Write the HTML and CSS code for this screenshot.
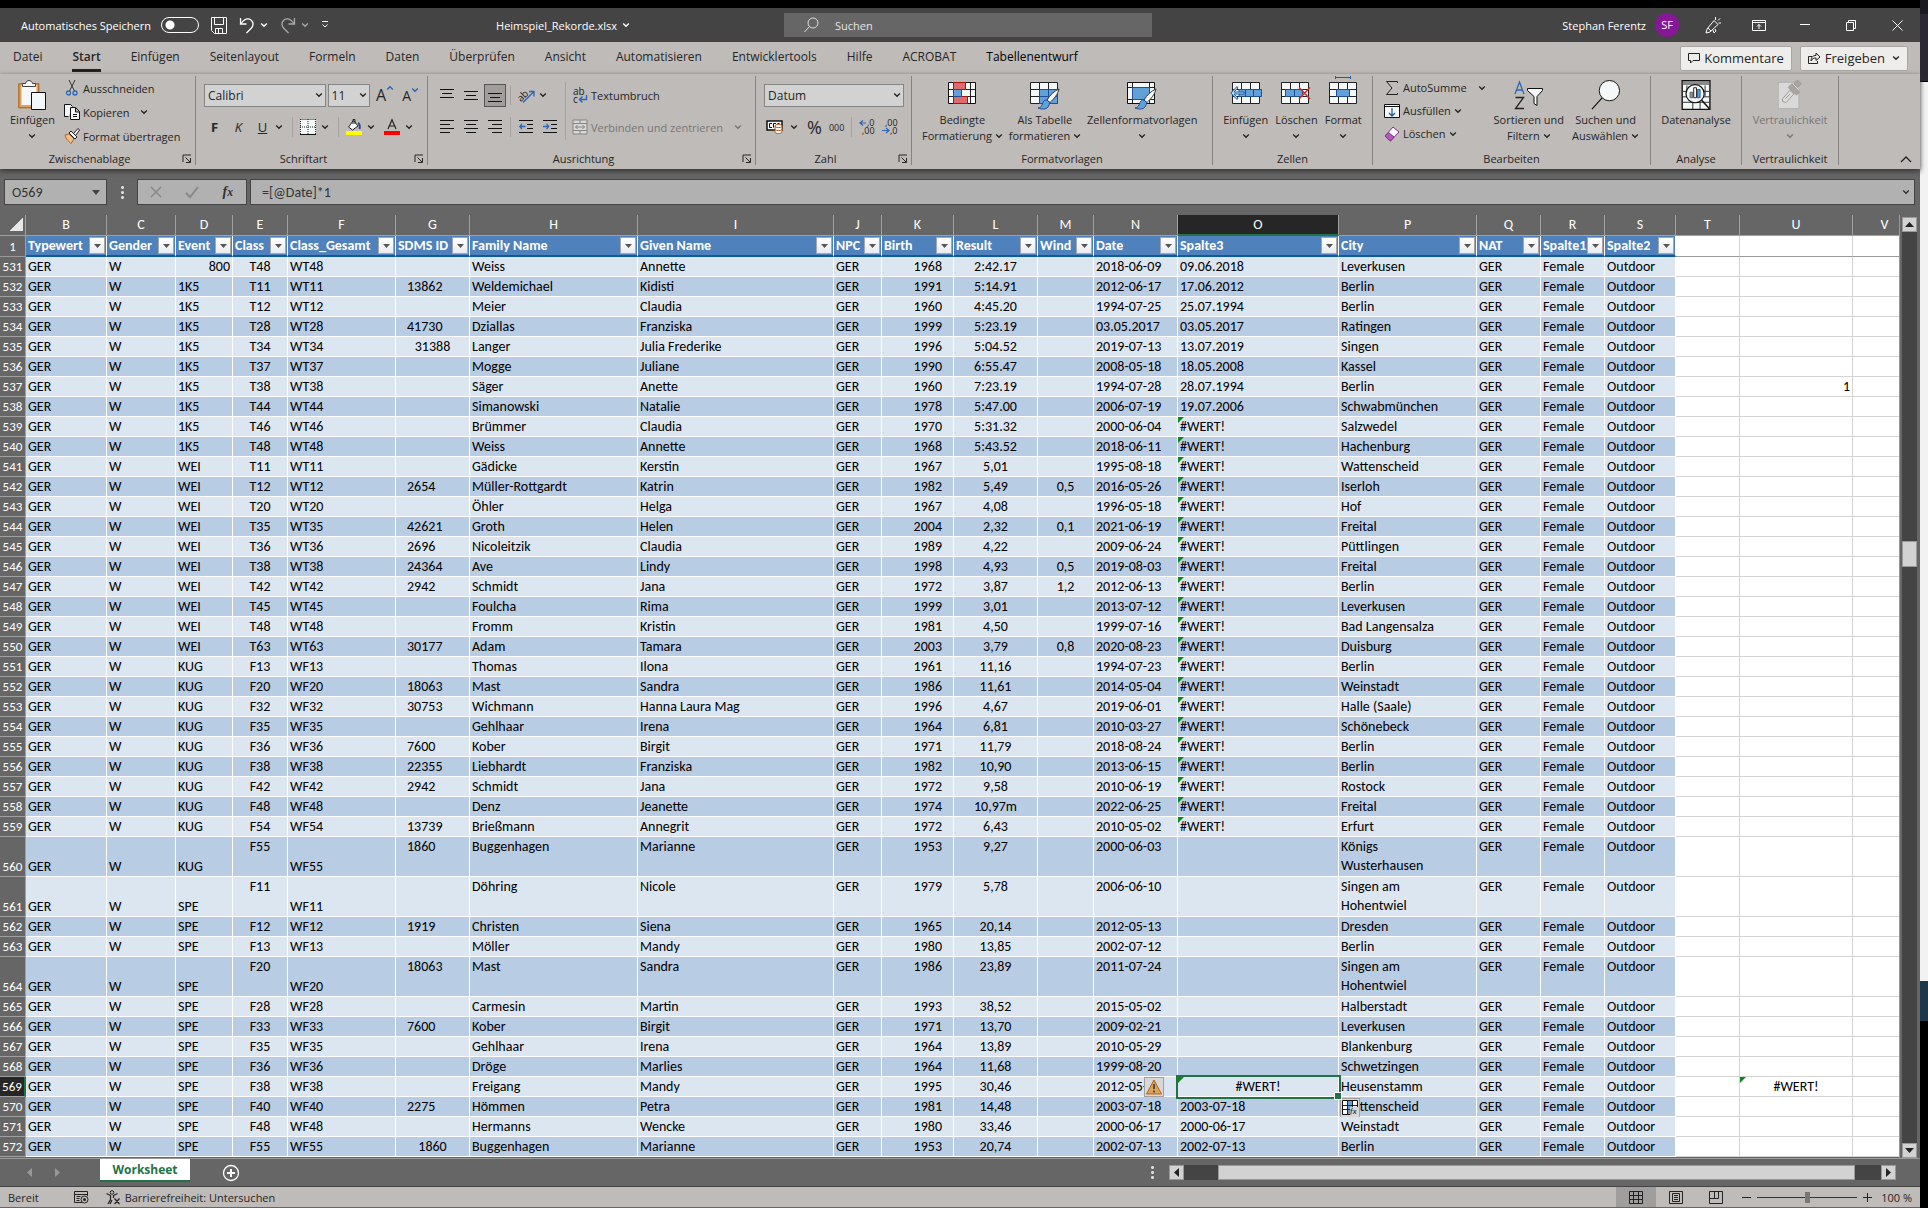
FILE: index.html
```
<!DOCTYPE html>
<html lang="de">
<head>
    <meta charset="utf-8">
    <title>Heimspiel_Rekorde.xlsx</title>
    <link rel="stylesheet" href="styles.css">
</head>
<body>

<!-- shared icons -->
<svg class="sprite" aria-hidden="true">
    <symbol id="chev" viewBox="0 0 8 8"><path d="M1.2 2.5 4 5.3 6.8 2.5" fill="none" stroke="currentColor" stroke-width="1.4"/></symbol>
    <symbol id="launch" viewBox="0 0 10 10"><path d="M1 8V1h8M3.500 3.500 8 8M8.500 4v4.500H4" fill="none" stroke="currentColor"/></symbol>
    <symbol id="undo" viewBox="0 0 16 17"><path d="M1.500 1v6h6M2 6.500C5 2 9 .8 12 3c3 2.500 2.500 6 0 8.500L7.500 16" fill="none" stroke="currentColor" stroke-width="1.3"/></symbol>
    <symbol id="grid" viewBox="0 0 28 22"><path d="M.5.5h27v21H.5z" fill="#f4f8f8" stroke="#222"/><path d="M9.500 1v20M18.500 1v20M1 7.500h26M1 14.500h26" stroke="#222" fill="none"/></symbol>
    <symbol id="brush" viewBox="0 0 24 22"><path d="M23 1c-5 2-9 6-12 11l3 2.500C18 11 22 6 23 1z" fill="#f4f8f8" stroke="#333"/><path d="M11 12c-4 0-4 3-5 5-1 2-2 2.500-4 3 4 1.500 8 1.500 10-1 1-1.500 1.500-3 1.500-4.500z" fill="#62a0d8" stroke="#1e4e9c"/></symbol>
</svg>

<div class="window">
    <header class="titlebar">
        <div class="title-left">
            <div class="quick">
                <label class="autosave">Automatisches Speichern <input type="checkbox" class="toggle"></label>
                <button aria-label="Speichern"><svg width="16" height="17" viewBox="0 0 16 17"><path d="M.5.5h15v16h-12l-3-3zM3.500.5v7h9v-7M4.500 16.500v-5h7v5M7.500 12v4" fill="none" stroke="#fff"/></svg></button>
                <button aria-label="Rückgängig"><svg width="16" height="17"><use href="#undo"/></svg><svg class="chev"><use href="#chev"/></svg></button>
                <button aria-label="Wiederholen" class="dim"><svg width="16" height="17" viewBox="0 0 16 17"><g transform="matrix(-1 0 0 1 16 0)"><use href="#undo" width="16" height="17"/></g></svg><svg class="chev"><use href="#chev"/></svg></button>
                <button aria-label="Symbolleiste anpassen"><svg width="8" height="8" viewBox="0 0 8 8"><path d="M1 .5h6M1.500 3.500 4 6l2.500-2.500" fill="none" stroke="#fff"/></svg></button>
            </div>
            <button class="filename">Heimspiel_Rekorde.xlsx <svg class="chev"><use href="#chev"/></svg></button>
        </div>
        <label class="search">
            <svg width="15" height="16" viewBox="0 0 15 16"><circle cx="9" cy="6" r="5" fill="none" stroke="#ddd"/><path d="M5.500 9.500.5 15" stroke="#ddd"/></svg>
            <input type="text" placeholder="Suchen" aria-label="Suchen">
        </label>
        <div class="title-right">
            <span>Stephan Ferentz</span>
            <span class="avatar">SF</span>
            <button aria-label="Neuigkeiten"><svg width="16" height="17" viewBox="0 0 16 17"><path d="M9 3.500 2 12l-1 4 4-1 8-7.500zM3 11l3 3M10.500 3V0M13 3.500l2-2M13.500 6H16M8 13l1 3 2-2-1-2" fill="none" stroke="#fff"/></svg></button>
            <button aria-label="Menüband-Optionen"><svg width="14" height="11" viewBox="0 0 14 11"><path d="M.5.5h13v10H.5zM.5 2.500h13M7 9V4.500M5 6.500l2-2 2 2" fill="none" stroke="#fff"/></svg></button>
            <button aria-label="Minimieren"><svg width="10" height="10"><path d="M0 4.500h10" stroke="#fff"/></svg></button>
            <button aria-label="Verkleinern"><svg width="10" height="11" viewBox="0 0 10 11"><path d="M.5 2.500h7v8h-7zM2.500 2V.5h7v8H8" fill="none" stroke="#fff"/></svg></button>
            <button aria-label="Schließen"><svg width="11" height="11" viewBox="0 0 11 11"><path d="M.5.5l10 10M10.500.5l-10 10" stroke="#fff"/></svg></button>
        </div>
    </header>

    <nav class="tabs">
        <a href="#datei">Datei</a>
        <a href="#start" class="active">Start</a>
        <a href="#einfuegen">Einfügen</a>
        <a href="#layout">Seitenlayout</a>
        <a href="#formeln">Formeln</a>
        <a href="#daten">Daten</a>
        <a href="#pruefen">Überprüfen</a>
        <a href="#ansicht">Ansicht</a>
        <a href="#auto">Automatisieren</a>
        <a href="#dev">Entwicklertools</a>
        <a href="#hilfe">Hilfe</a>
        <a href="#acrobat">ACROBAT</a>
        <a href="#entwurf" class="context">Tabellenentwurf</a>
        <div class="share">
            <button><svg width="12" height="11" viewBox="0 0 12 11"><path d="M.5.5h11v7H5l-2.500 2.500V7.500h-2z" fill="none" stroke="#222"/></svg>Kommentare</button>
            <button><svg width="13" height="12" viewBox="0 0 13 12"><path d="M4 4.500H.5v7h9V9M3 9c0-4 2-5.500 5-5.500V1l4 4-4 3.500V6C6 6 4 6.500 3 9z" fill="none" stroke="#222"/></svg>Freigeben<svg class="chev"><use href="#chev"/></svg></button>
        </div>
    </nav>

    <div class="ribbon">
        <section class="group g-clip">
            <div class="tools">
                <button class="big">
                    <svg width="28" height="30" viewBox="0 0 28 30"><path d="M.8 3.800h20v24H.8z" fill="#dfa257" stroke="#a85a12"/><path d="M3.500 5h15v20h-15z" fill="#f4f8f8"/><path d="M4.500 6.500v-3h3c1-4 6-4 7 0h3v3z" fill="#f4f8f8" stroke="#444"/><path d="M13.500 12.500h14v17h-14z" fill="#f4f8f8" stroke="#111"/></svg>
                    <span>Einfügen</span><svg class="chev"><use href="#chev"/></svg>
                </button>
                <div class="stack">
                    <button><svg width="16" height="16" viewBox="0 0 16 16"><path d="M5 0l5.500 11M11 0 5.500 11" stroke="#333" fill="none"/><circle cx="4.500" cy="13" r="2" fill="none" stroke="#2a66b8" stroke-width="1.3"/><circle cx="11" cy="13" r="2" fill="none" stroke="#2a66b8" stroke-width="1.3"/></svg>Ausschneiden</button>
                    <button><svg width="16" height="16" viewBox="0 0 16 16"><path d="M4.500 12.500h-4V.5h6l2 2" fill="#f4f8f8" stroke="#111"/><path d="M6.500 3.500h5l4 4v8h-9zM11.500 4v4h4M9 10.500h4M9 12.500h4" fill="#f4f8f8" stroke="#111"/></svg>Kopieren<svg class="chev wide"><use href="#chev"/></svg></button>
                    <button><svg width="16" height="16" viewBox="0 0 16 16"><path d="M1 7l4-1 5 5-3 4.500C5 13 2 12 1 7z" fill="#f0c088" stroke="#b5601a"/><path d="M5 5l6 6 2-2-6-6zM10 5l4-4.500L15.500 2 12 7" fill="#f4f8f8" stroke="#222"/></svg>Format übertragen</button>
                </div>
            </div>
            <footer class="has-launch">Zwischenablage<svg class="launch"><use href="#launch"/></svg></footer>
        </section>

        <section class="group g-font">
            <div class="tools rows">
                <div class="line">
                    <span class="combo c-font"><select aria-label="Schriftart"><option>Calibri</option></select><svg class="chev"><use href="#chev"/></svg></span>
                    <span class="combo c-size"><select aria-label="Schriftgrad"><option>11</option></select><svg class="chev"><use href="#chev"/></svg></span>
                    <button class="grow" aria-label="Schriftgrad vergrößern">A<svg class="chev up"><use href="#chev"/></svg></button>
                    <button class="grow small" aria-label="Schriftgrad verkleinern">A<svg class="chev"><use href="#chev"/></svg></button>
                </div>
                <div class="line fmt">
                    <button class="letter"><b>F</b></button>
                    <button class="letter"><i>K</i></button>
                    <button class="letter"><u>U</u></button>
                    <svg class="chev"><use href="#chev"/></svg>
                    <hr>
                    <button aria-label="Rahmen"><svg width="16" height="16" viewBox="0 0 16 16"><path d="M0 0h16v16H0z" fill="#f4f8f8"/><path d="M.5.5h15M.5 0v15M15.500 0v15M8 0v15M0 8h16" stroke="#222" stroke-dasharray="1 1" fill="none"/><path d="M0 15.500h16" stroke="#111"/></svg></button>
                    <svg class="chev"><use href="#chev"/></svg>
                    <hr>
                    <button aria-label="Füllfarbe"><svg width="16" height="16" viewBox="0 0 16 16"><path d="M7 2 2.500 8l4 3L12 7 8 2z" fill="#f4f8f8" stroke="#222"/><path d="M7 5V.5h2V5" fill="none" stroke="#222"/><path d="M12 4c2 1 2 3 1.500 6" fill="none" stroke="#2b4a8a" stroke-width="2"/><path d="M0 12h16v4H0z" fill="#ff0"/></svg></button>
                    <svg class="chev"><use href="#chev"/></svg>
                    <button aria-label="Schriftfarbe"><svg width="16" height="16" viewBox="0 0 16 16"><path d="M4 10 8 .8 12 10M5.500 7h5" fill="none" stroke="#222" stroke-width="1.200"/><path d="M0 12h16v4H0z" fill="#f00"/></svg></button>
                    <svg class="chev"><use href="#chev"/></svg>
                </div>
            </div>
            <footer class="has-launch">Schriftart<svg class="launch"><use href="#launch"/></svg></footer>
        </section>

        <section class="group g-align">
            <div class="tools">
                <div class="rows">
                    <div class="line al">
                        <button aria-label="Oben"><svg width="14" height="16"><path d="M0 2.500h14M2 6.500h10M0 10.500h14" stroke="#111"/></svg></button>
                        <button aria-label="Mitte"><svg width="14" height="16"><path d="M0 4.500h14M2 8.500h10M0 12.500h14" stroke="#111"/></svg></button>
                        <button class="pressed" aria-label="Unten"><svg width="14" height="16"><path d="M0 6.500h14M2 10.500h10M0 14.500h14" stroke="#111"/></svg></button>
                        <hr>
                        <button aria-label="Ausrichtung"><svg width="17" height="17" viewBox="0 0 17 17"><text x="-1" y="12" font-size="10" transform="rotate(-45 5 9)" fill="#222">ab</text><path d="M5 15.500 15.500 5M11 4.500h5v5" fill="none" stroke="#2a66b8" stroke-width="1.300"/></svg></button>
                        <svg class="chev"><use href="#chev"/></svg>
                    </div>
                    <div class="line al">
                        <button aria-label="Linksbündig"><svg width="14" height="14"><path d="M0 .5h14M0 4.500h10M0 8.500h14M0 12.500h10" stroke="#111"/></svg></button>
                        <button aria-label="Zentriert"><svg width="14" height="14"><path d="M0 .5h14M2 4.500h10M0 8.500h14M2 12.500h10" stroke="#111"/></svg></button>
                        <button aria-label="Rechtsbündig"><svg width="14" height="14"><path d="M0 .5h14M4 4.500h10M0 8.500h14M4 12.500h10" stroke="#111"/></svg></button>
                        <hr>
                        <button aria-label="Einzug verkleinern"><svg width="14" height="14"><path d="M0 .5h14M8 4.500h6M8 8.500h6M0 12.500h14" stroke="#111"/><path d="M6.500 6.500H.8M3 4 .8 6.500 3 9" fill="none" stroke="#2a66b8" stroke-width="1.300"/></svg></button>
                        <button aria-label="Einzug vergrößern"><svg width="14" height="14"><path d="M0 .5h14M8 4.500h6M8 8.500h6M0 12.500h14" stroke="#111"/><path d="M0 6.500h5.700M3.500 4l2.200 2.500L3.500 9" fill="none" stroke="#2a66b8" stroke-width="1.300"/></svg></button>
                    </div>
                </div>
                <hr class="tall">
                <div class="rows wrap">
                    <button><svg width="16" height="17" viewBox="0 0 16 17"><text x="1" y="8" font-size="10" fill="#222">ab</text><text x="1" y="16" font-size="10" fill="#222">c</text><path d="M14.500 8v4.500H8M10.500 9.500 7.500 12.500l3 3" fill="none" stroke="#2a66b8" stroke-width="1.400"/></svg>Textumbruch</button>
                    <button class="off"><svg width="16" height="16" viewBox="0 0 16 16"><path d="M1 1h14v14H1zM1 4.500h14M1 11.500h14M8 1v3.500M8 11.500V15M3.500 8h9M5.500 6l-2 2 2 2M10.500 6l2 2-2 2" fill="#d8d8d8" stroke="#858585"/></svg>Verbinden und zentrieren<svg class="chev wide"><use href="#chev"/></svg></button>
                </div>
            </div>
            <footer class="has-launch">Ausrichtung<svg class="launch"><use href="#launch"/></svg></footer>
        </section>

        <section class="group g-num">
            <div class="tools rows">
                <div class="line"><span class="combo c-num"><select aria-label="Zahlenformat"><option>Datum</option></select><svg class="chev"><use href="#chev"/></svg></span></div>
                <div class="line num">
                    <button aria-label="Buchhaltung"><svg width="18" height="14" viewBox="0 0 18 14"><path d="M1 1h15v9H1z" fill="#f4f8f8" stroke="#111" stroke-width="1.500"/><path d="M6 3.500H3.500v4H6M10 3.500H7.500v4M13.500 3.500h-2" fill="none" stroke="#111"/><path d="M9 6c0-2 7-2 7 0v6c0 2-7 2-7 0z" fill="#fff" stroke="#c0560c"/><path d="M9 6.500c1 1.500 6 1.500 7 0M9 9.500c1 1.500 6 1.500 7 0" fill="none" stroke="#c0560c"/></svg></button>
                    <svg class="chev"><use href="#chev"/></svg>
                    <button class="pct">%</button>
                    <button class="thou">000</button>
                    <hr>
                    <button aria-label="Dezimalstelle hinzufügen"><svg width="16" height="16" viewBox="0 0 16 16"><text x="8" y="7" font-size="9" fill="#222">,0</text><text x="3" y="15" font-size="9" fill="#222">,00</text><path d="M7 4H1M4 1.500 1 4l3 2.500" fill="none" stroke="#2a66b8" stroke-width="1.200"/></svg></button>
                    <button aria-label="Dezimalstelle löschen"><svg width="16" height="16" viewBox="0 0 16 16"><text x="3" y="7" font-size="9" fill="#222">,00</text><text x="8" y="15" font-size="9" fill="#222">,0</text><path d="M0 11.500h7M4 9l3 2.500L4 14" fill="none" stroke="#2a66b8" stroke-width="1.200"/></svg></button>
                </div>
            </div>
            <footer class="has-launch">Zahl<svg class="launch"><use href="#launch"/></svg></footer>
        </section>

        <section class="group g-styles">
            <div class="tools">
                <button class="big"><svg width="28" height="30" viewBox="0 0 28 30"><path d="M.5 2.500h27v21H.5z" fill="#f4f8f8" stroke="#111"/><path d="M22.500 3v20M1 9.500h26M1 16.500h26M5.500 3v20" stroke="#222"/><path d="M5.500 2.500h12v7h-12zM5.500 16.500h14v7h-14z" fill="#dd6b6b" stroke="#a11"/><path d="M5.500 9.500h8v7h-8z" fill="#62a0d8" stroke="#1e4e9c"/></svg><span>Bedingte</span><span>Formatierung <svg class="chev"><use href="#chev"/></svg></span></button>
                <button class="big"><svg width="30" height="30" viewBox="0 0 30 30"><use href="#grid" y="2" width="28" height="22"/><path d="M9.500 9.500h18v14h-18z" fill="#62a0d8" stroke="#1e4e9c"/><path d="M18.500 10v13M10 16.500h17" stroke="#1e4e9c"/><use href="#brush" x="6" y="8" width="24" height="22"/></svg><span>Als Tabelle</span><span>formatieren <svg class="chev"><use href="#chev"/></svg></span></button>
                <button class="big"><svg width="30" height="30" viewBox="0 0 30 30"><path d="M.5 2.500h27v21H.5z" fill="#f4f8f8" stroke="#111"/><path d="M5.500 3v20M22.500 3v20M1 7.500h26M1 19.500h26" stroke="#222"/><path d="M5.500 7.500h17v12h-17z" fill="#62a0d8" stroke="#1e4e9c"/><use href="#brush" x="6" y="8" width="24" height="22"/></svg><span>Zellenformatvorlagen</span><svg class="chev"><use href="#chev"/></svg></button>
            </div>
            <footer>Formatvorlagen</footer>
        </section>

        <section class="group g-cells">
            <div class="tools">
                <button class="big"><svg width="32" height="30" viewBox="0 0 32 30"><use href="#grid" x="2" y="2" width="28" height="22"/><path d="M9 9.500h22.500v7H9zM15.500 9.500v7M23.500 9.500v7" fill="#62a0d8" stroke="#1e4e9c"/><path d="M14 12H4l4-4-1-1.500L.8 13 7 19.500 8 18l-4-4h10z" fill="#b8d4ee" stroke="#1e5ea8"/></svg><span>Einfügen</span><svg class="chev"><use href="#chev"/></svg></button>
                <button class="big"><svg width="30" height="30" viewBox="0 0 30 30"><use href="#grid" y="2" width="28" height="22"/><path d="M4.500 9.500h17v7h-17zM13.500 9.500v7" fill="#62a0d8" stroke="#1e4e9c"/><path d="M18 7.500 29 19M29 7.500 18 19" stroke="#d03020" stroke-width="1.600"/></svg><span>Löschen</span><svg class="chev"><use href="#chev"/></svg></button>
                <button class="big"><svg width="28" height="30" viewBox="0 0 28 30"><use href="#grid" y="2" width="28" height="22"/><path d="M7.500 9.500h13v7h-13z" fill="#62a0d8" stroke="#1e4e9c"/><path d="M6.500-4v3M21.500-4v3M6.500-2.500h15" stroke="#1e5ea8"/></svg><span>Format</span><svg class="chev"><use href="#chev"/></svg></button>
            </div>
            <footer>Zellen</footer>
        </section>

        <section class="group g-edit">
            <div class="tools">
                <div class="stack">
                    <button><svg width="16" height="16" viewBox="0 0 16 16"><path d="M13.500 3V1.500H2.500L8 8l-5.500 6.500h11V13" fill="none" stroke="#222"/></svg>AutoSumme<svg class="chev wide"><use href="#chev"/></svg></button>
                    <button><svg width="16" height="16" viewBox="0 0 16 16"><path d="M.5 1.500h15v13H.5zM.5 3.500h15" fill="#f4f8f8" stroke="#111"/><path d="M8 5v7.500M5 10l3 3 3-3" fill="none" stroke="#1e5ea8" stroke-width="1.300"/></svg>Ausfüllen<svg class="chev"><use href="#chev"/></svg></button>
                    <button><svg width="16" height="16" viewBox="0 0 16 16"><path d="M9 1l6 5-8.500 9L1 10z" fill="#f4f8f8" stroke="#8a2a94"/><path d="M4.500 6.500 10 11l-3.500 4L1 10z" fill="#b35abb" stroke="#8a2a94"/></svg>Löschen<svg class="chev"><use href="#chev"/></svg></button>
                </div>
                <button class="big"><svg width="30" height="30" viewBox="0 0 30 30"><path d="M1 14 5.500 2 10 14M2.500 10h6" fill="none" stroke="#2a66b8" stroke-width="1.300"/><path d="M1.500 17.500h8L1.500 28.500h8.500" fill="none" stroke="#222" stroke-width="1.300"/><path d="M13.500 8.500h15v2l-5.500 6v9l-3-2v-7l-6.500-6z" fill="#f4f8f8" stroke="#111"/></svg><span>Sortieren und</span><span>Filtern <svg class="chev"><use href="#chev"/></svg></span></button>
                <button class="big"><svg width="30" height="31" viewBox="0 0 30 31"><circle cx="18.500" cy="11" r="10.500" fill="#f4f8f8" stroke="#111"/><path d="M11 18.500.5 30" stroke="#111" stroke-width="1.200"/></svg><span>Suchen und</span><span>Auswählen <svg class="chev"><use href="#chev"/></svg></span></button>
            </div>
            <footer>Bearbeiten</footer>
        </section>

        <section class="group g-ana">
            <div class="tools">
                <button class="big"><svg width="32" height="33" viewBox="0 0 32 33"><path d="M.8.800h30.500v31.500H.8z" fill="#f4f8f8" stroke="#111" stroke-width="1.500"/><path d="M1.500 1.500h29v4h-29z" fill="#8a8a8a"/><path d="M1 12.500h30M1 18.500h30M1 24.500h30M6 6v12M12.500 24v8M20.500 24v8M26 6v12" stroke="#222"/><circle cx="15" cy="15" r="10" fill="#f4f8f8" stroke="#111" stroke-width="1.300"/><path d="M9.500 13.500h3v6h-3z" fill="#999" stroke="#555"/><path d="M13.500 8.500h3v11h-3z" fill="#fff" stroke="#111"/><path d="M17.500 10.500h3v9h-3z" fill="#62a0d8" stroke="#1e4e9c"/><path d="m22 22 9 10" stroke="#111" stroke-width="1.600"/></svg><span>Datenanalyse</span></button>
            </div>
            <footer>Analyse</footer>
        </section>

        <section class="group g-sens">
            <div class="tools">
                <button class="big off"><svg width="30" height="32" viewBox="0 0 30 32"><path d="M2.500 2.500h22v28h-22z" fill="#d9d9d9" stroke="#b0b0b0"/><path d="m7 20 8-9 4 4-8 9-4-1zM10 20l5-5" fill="#ddd" stroke="#999"/><path d="m13 8 4-4 8 9-3 3zM19 4l4-4 4 4-4 4z" fill="#a8a5a3" stroke="#999"/></svg><span>Vertraulichkeit</span><svg class="chev"><use href="#chev"/></svg></button>
            </div>
            <footer>Vertraulichkeit</footer>
        </section>
        <button class="collapse" aria-label="Menüband reduzieren"><svg width="12" height="7"><path d="M1 6l5-5 5 5" fill="none" stroke="#222" stroke-width="1.300"/></svg></button>
    </div>

    <div class="formulabar">
        <div class="namebox"><input type="text" value="O569" aria-label="Namenfeld"><svg width="8" height="5"><path d="M0 0h8L4 5z" fill="#444"/></svg></div>
        <span class="dots"></span>
        <div class="fx">
            <button aria-label="Abbrechen"><svg width="12" height="12"><path d="M1 1l10 10M11 1 1 11" stroke="#888" stroke-width="1.500"/></svg></button>
            <button aria-label="Eingeben"><svg width="14" height="12"><path d="M1 7l4 4L13 1" fill="none" stroke="#888" stroke-width="2"/></svg></button>
            <button class="fn">f<small>x</small></button>
        </div>
        <div class="formula"><input type="text" value="=[@Date]*1" aria-label="Formel"><svg class="chev"><use href="#chev"/></svg></div>
    </div>

    <main class="sheet">
        <div class="cells">
            <table>
                <colgroup id="cols"></colgroup>
                <thead id="head"></thead>
                <tbody id="rows"></tbody>
            </table>
        </div>
        <div class="vscroll">
            <button aria-label="Nach oben"><svg width="9" height="5"><path d="M0 5h9L4.500 0z" fill="#222"/></svg></button>
            <div class="track"><div class="thumb"></div></div>
            <button aria-label="Nach unten"><svg width="9" height="5"><path d="M0 0h9L4.500 5z" fill="#222"/></svg></button>
        </div>
    </main>

    <div class="sheetbar">
        <button class="nav" aria-label="Zurück"><svg width="5" height="9"><path d="M5 0v9L0 4.500z" fill="#999"/></svg></button>
        <button class="nav" aria-label="Weiter"><svg width="5" height="9"><path d="M0 0v9l5-4.500z" fill="#999"/></svg></button>
        <button class="sheettab">Worksheet</button>
        <button class="add" aria-label="Neues Blatt"><svg width="18" height="18" viewBox="0 0 18 18"><circle cx="9" cy="9" r="7.500" fill="none" stroke="#fff" stroke-width="1.300"/><path d="M9 5v8M5 9h8" stroke="#fff" stroke-width="2"/></svg></button>
        <span class="dots"></span>
        <div class="hscroll">
            <button aria-label="Nach links"><svg width="5" height="9"><path d="M5 0v9L0 4.500z" fill="#222"/></svg></button>
            <div class="track"><div class="thumb"></div></div>
            <button aria-label="Nach rechts"><svg width="5" height="9"><path d="M0 0v9l5-4.500z" fill="#222"/></svg></button>
        </div>
    </div>

    <footer class="status">
        <span class="ready">Bereit</span>
        <svg class="macro" width="15" height="13" viewBox="0 0 15 13"><path d="M8 11.500H.5V.5h13V5M.5 3.500h13M2.500 5.500h4M2.500 7.500h3M2.500 9.500h3" fill="none" stroke="#222"/><circle cx="10.500" cy="8.500" r="3.500" fill="none" stroke="#222"/><circle cx="10.500" cy="8.500" r="1.500" fill="#222"/></svg>
        <button class="access"><svg width="15" height="15" viewBox="0 0 15 15"><circle cx="6" cy="2.500" r="1.800" fill="none" stroke="#222"/><path d="M.5 3.500l4 2v4L2 14M11.500 3.500l-4 2V8M4 14l2-4M8.500 8.500l5 5.500M13.500 8.500l-5 5.500" fill="none" stroke="#222" stroke-width="1.200"/></svg>Barrierefreiheit: Untersuchen</button>
        <div class="views">
            <button class="on" aria-label="Normal"><svg width="14" height="13"><path d="M.5.5h13v12H.5zM.5 4.500h13M.5 8.500h13M4.500.5v12M9.500.5v12" fill="none" stroke="#222"/></svg></button>
            <button aria-label="Seitenlayout"><svg width="14" height="13"><path d="M.5.5h13v12H.5zM3.500 2.500h7v8h-7zM5 4.500h4M5 6.500h4M5 8.500h4" fill="none" stroke="#222"/></svg></button>
            <button aria-label="Umbruchvorschau"><svg width="14" height="13"><path d="M.5.5h13v12H.5zM5.500.5v7M9.500.5v7M.5 7.500h9" fill="none" stroke="#222"/></svg></button>
        </div>
        <button class="zoom" aria-label="Verkleinern"><svg width="9" height="9"><path d="M0 4.500h9" stroke="#222"/></svg></button>
        <input type="range" class="slider" min="0" max="100" value="50" aria-label="Zoom">
        <button class="zoom" aria-label="Vergrößern"><svg width="9" height="9"><path d="M0 4.500h9M4.500 0v9" stroke="#222"/></svg></button>
        <span class="percent">100 %</span>
    </footer>
</div>
<div class="desktop"></div>

<script>
    // letter, width, header text
    const columns = [
        ['B', 81, 'Typewert'], ['C', 69, 'Gender'], ['D', 57, 'Event'], ['E', 55, 'Class'],
        ['F', 108, 'Class_Gesamt'], ['G', 74, 'SDMS ID'], ['H', 168, 'Family Name'], ['I', 196, 'Given Name'],
        ['J', 48, 'NPC'], ['K', 72, 'Birth'], ['L', 84, 'Result'], ['M', 56, 'Wind'], ['N', 84, 'Date'],
        ['O', 161, 'Spalte3'], ['P', 138, 'City'], ['Q', 64, 'NAT'], ['R', 64, 'Spalte1'], ['S', 71, 'Spalte2'],
        ['T', 64, ''], ['U', 113, ''], ['V', 64, '']
    ];

    // rows with a wrapped city
    const tallRows = [560, 561, 564];

    // event|class|id|family|given|birth|result|wind|date|spalte3|city
    const records = `800|T48||Weiss|Annette|1968|2:42.17||2018-06-09|09.06.2018|Leverkusen
1K5|T11|13862|Weldemichael|Kidisti|1991|5:14.91||2012-06-17|17.06.2012|Berlin
1K5|T12||Meier|Claudia|1960|4:45.20||1994-07-25|25.07.1994|Berlin
1K5|T28|41730|Dziallas|Franziska|1999|5:23.19||03.05.2017|03.05.2017|Ratingen
1K5|T34|31388|Langer|Julia Frederike|1996|5:04.52||2019-07-13|13.07.2019|Singen
1K5|T37||Mogge|Juliane|1990|6:55.47||2008-05-18|18.05.2008|Kassel
1K5|T38||Säger|Anette|1960|7:23.19||1994-07-28|28.07.1994|Berlin
1K5|T44||Simanowski|Natalie|1978|5:47.00||2006-07-19|19.07.2006|Schwabmünchen
1K5|T46||Brümmer|Claudia|1970|5:31.32||2000-06-04|#WERT!|Salzwedel
1K5|T48||Weiss|Annette|1968|5:43.52||2018-06-11|#WERT!|Hachenburg
WEI|T11||Gädicke|Kerstin|1967|5,01||1995-08-18|#WERT!|Wattenscheid
WEI|T12|2654|Müller-Rottgardt|Katrin|1982|5,49|0,5|2016-05-26|#WERT!|Iserloh
WEI|T20||Öhler|Helga|1967|4,08||1996-05-18|#WERT!|Hof
WEI|T35|42621|Groth|Helen|2004|2,32|0,1|2021-06-19|#WERT!|Freital
WEI|T36|2696|Nicoleitzik|Claudia|1989|4,22||2009-06-24|#WERT!|Püttlingen
WEI|T38|24364|Ave|Lindy|1998|4,93|0,5|2019-08-03|#WERT!|Freital
WEI|T42|2942|Schmidt|Jana|1972|3,87|1,2|2012-06-13|#WERT!|Berlin
WEI|T45||Foulcha|Rima|1999|3,01||2013-07-12|#WERT!|Leverkusen
WEI|T48||Fromm|Kristin|1981|4,50||1999-07-16|#WERT!|Bad Langensalza
WEI|T63|30177|Adam|Tamara|2003|3,79|0,8|2020-08-23|#WERT!|Duisburg
KUG|F13||Thomas|Ilona|1961|11,16||1994-07-23|#WERT!|Berlin
KUG|F20|18063|Mast|Sandra|1986|11,61||2014-05-04|#WERT!|Weinstadt
KUG|F32|30753|Wichmann|Hanna Laura Mag|1996|4,67||2019-06-01|#WERT!|Halle (Saale)
KUG|F35||Gehlhaar|Irena|1964|6,81||2010-03-27|#WERT!|Schönebeck
KUG|F36|7600|Kober|Birgit|1971|11,79||2018-08-24|#WERT!|Berlin
KUG|F38|22355|Liebhardt|Franziska|1982|10,90||2013-06-15|#WERT!|Berlin
KUG|F42|2942|Schmidt|Jana|1972|9,58||2010-06-19|#WERT!|Rostock
KUG|F48||Denz|Jeanette|1974|10,97m||2022-06-25|#WERT!|Freital
KUG|F54|13739|Brießmann|Annegrit|1972|6,43||2010-05-02|#WERT!|Erfurt
KUG|F55|1860|Buggenhagen|Marianne|1953|9,27||2000-06-03||Königs Wusterhausen
SPE|F11||Döhring|Nicole|1979|5,78||2006-06-10||Singen am Hohentwiel
SPE|F12|1919|Christen|Siena|1965|20,14||2012-05-13||Dresden
SPE|F13||Möller|Mandy|1980|13,85||2002-07-12||Berlin
SPE|F20|18063|Mast|Sandra|1986|23,89||2011-07-24||Singen am Hohentwiel
SPE|F28||Carmesin|Martin|1993|38,52||2015-05-02||Halberstadt
SPE|F33|7600|Kober|Birgit|1971|13,70||2009-02-21||Leverkusen
SPE|F35||Gehlhaar|Irena|1964|13,89||2010-05-29||Blankenburg
SPE|F36||Dröge|Marlies|1964|11,68||1999-08-20||Schwetzingen
SPE|F38||Freigang|Mandy|1995|30,46||2012-05-19|#WERT!|Heusenstamm
SPE|F40|2275|Hömmen|Petra|1981|14,48||2003-07-18|2003-07-18|Wattenscheid
SPE|F48||Hermanns|Wencke|1980|33,46||2000-06-17|2000-06-17|Weinstadt
SPE|F55|1860|Buggenhagen|Marianne|1953|20,74||2002-07-13|2002-07-13|Berlin`.split('\n');

    const warning = '<button class="tag warn" aria-label="Fehler"><svg width="16" height="16" viewBox="0 0 16 16"><path d="M8 1 15.500 15H.5z" fill="#dda25a" stroke="#b5601a"/><path d="M8 5v5M8 11.500v2" stroke="#333" stroke-width="1.500"/></svg></button>';
    const autofill = '<button class="tag fill" aria-label="AutoKorrektur"><svg width="16" height="16" viewBox="0 0 16 16"><path d="M.5.5h15v14H.5z" fill="#fff" stroke="#111"/><path d="M5.500 1h5v13h-5z" fill="#62a0d8"/><path d="M5.500 1v13M10.500 1v13M1 5.500h14M1 9.500h14" stroke="#222"/><path d="M8 7h8v9H8z" fill="#d8d8d8"/><text x="8" y="14" font-size="9" font-style="italic" fill="#222">fx</text></svg></button>';

    document.getElementById('cols').innerHTML = '<col style="width:26px">' +
        columns.map(c => `<col style="width:${c[1]}px">`).join('');

    document.getElementById('head').innerHTML =
        '<tr class="letters"><th class="corner"></th>' +
        columns.map(c => `<th${c[0] === 'O' ? ' class="current"' : ''}>${c[0]}</th>`).join('') + '</tr>' +
        '<tr class="names"><th class="rownum">1</th>' +
        columns.map(c => c[2]
            ? `<th class="name"><div><span>${c[2]}</span><button aria-label="Filter"><svg width="7" height="4"><path d="M0 0h7L3.500 4z" fill="#555"/></svg></button></div></th>`
            : '<td class="plain"></td>').join('') + '</tr>';

    document.getElementById('rows').innerHTML = records.map((line, i) => {
        const num = 531 + i;
        const [event, cls, id, family, given, birth, result, wind, date, extra, city] = line.split('|');
        const error = extra === '#WERT!' ? ' error' : '';
        const selected = num === 569;
        const idAlign = num === 535 || num === 572 ? 'mid' : 'indent';
        const uCell = num === 537 ? '<td class="plain right">1</td>'
            : selected ? '<td class="plain mid error">#WERT!</td>' : '<td class="plain"></td>';
        return `<tr${tallRows.includes(num) ? ' class="tall-row"' : ''}>
            <th class="rownum${selected ? ' current' : ''}">${num}</th>
            <td class="low">GER</td><td class="low">W</td>
            <td class="low${event === '800' ? ' right' : ''}">${event}</td>
            <td class="mid">${cls}</td><td class="low">W${cls}</td>
            <td class="${idAlign}">${id}</td><td>${family}</td><td>${given}</td><td>GER</td>
            <td class="birth">${birth}</td><td class="mid">${result}</td><td class="mid">${wind}</td><td>${date}</td>
            <td class="${selected ? 'mid selected' : ''}${error}">${extra}${selected ? warning : ''}</td>
            <td class="city">${city}${num === 570 ? autofill : ''}</td>
            <td>GER</td><td>Female</td><td>Outdoor</td>
            <td class="plain"></td>${uCell}<td class="plain"></td>
        </tr>`;
    }).join('');
</script>

</body>
</html>
```
FILE: styles.css
```
* {
    box-sizing: border-box;
}

body {
    margin: 0;
    height: 100vh;
    display: flex;
    overflow: hidden;
    background: #000;
    color: #262626;
    font-family: "Segoe UI", "Open Sans", sans-serif;
    font-size: 11px;
}

button, input, select {
    font: inherit;
    color: inherit;
    background: none;
    border: none;
    padding: 0;
    margin: 0;
    outline: none;
}

svg {
    display: block;
    flex: none;
    overflow: visible;
}

.sprite {
    position: absolute;
    width: 0;
    height: 0;
    overflow: hidden;
}

.chev {
    width: 8px;
    height: 8px;
}

.window {
    flex: 1;
    min-width: 0;
    display: flex;
    flex-direction: column;
    border-top: 8px solid #000;
    background: #666;
}

/* strip of the desktop next to the window */
.desktop {
    width: 8px;
    background: linear-gradient(to bottom, #1b1a20 14px, #2b2833 14px, #2b2833 81px, #000 81px, #000 82px, #f2f2f2 82px, #f2f2f2 981px, #1f374b 981px, #1f374b 1021px, #000 1021px);
}

/* title bar */
.titlebar {
    height: 34px;
    display: grid;
    grid-template-columns: 784fr 368px 768fr;
    align-items: center;
    background: #444;
    color: #fff;
}

.title-left, .quick, .title-right, .autosave {
    display: flex;
    align-items: center;
}

.title-left {
    justify-content: space-between;
    padding: 0 154px 0 21px;
}

.quick {
    gap: 12px;
}

.autosave {
    gap: 10px;
}

.quick button, .filename {
    display: flex;
    align-items: center;
    gap: 5px;
}

.dim {
    color: #a8a8a8;
}

.toggle {
    appearance: none;
    width: 38px;
    height: 16px;
    border: 1px solid #fff;
    border-radius: 8px;
    background: radial-gradient(circle at 8px 7px, #fff 4px, transparent 5px);
}

.search {
    height: 24px;
    display: flex;
    align-items: center;
    gap: 16px;
    padding-left: 20px;
    background: #666;
}

.search input::placeholder {
    color: #e4e4e4;
}

.title-right {
    justify-content: flex-end;
}

.title-right button {
    width: 46px;
    display: flex;
    justify-content: center;
}

.avatar {
    width: 24px;
    height: 24px;
    margin: 0 11px 0 9px;
    border-radius: 50%;
    background: #881798;
    line-height: 24px;
    text-align: center;
}

/* tabs */
.tabs {
    height: 32px;
    display: flex;
    align-items: center;
    gap: 30px;
    padding: 0 12px 0 13px;
    background: #bfbbb8;
    font-size: 12px;
}

.tabs a {
    color: #262626;
    text-decoration: none;
    line-height: 24px;
    border-bottom: 3px solid transparent;
}

.tabs a.active {
    font-weight: 600;
    border-bottom-color: #222;
}

.tabs a.context {
    color: #000;
}

.share {
    display: flex;
    gap: 8px;
    margin-left: auto;
    font-size: 13px;
}

.share button {
    height: 25px;
    display: flex;
    align-items: center;
    gap: 4px;
    padding: 0 7px;
    background: #efedec;
    border: 1px solid #aaa6a3;
    border-radius: 2px;
}

.share .chev {
    margin-left: 3px;
}

/* ribbon */
.ribbon {
    height: 95px;
    display: flex;
    padding: 2px 0 4px;
    background: #bfbbb8;
    position: relative;
    z-index: 1;
    box-shadow: 0 2px 5px #333;
}

.group {
    display: flex;
    flex-direction: column;
    border-right: 1px solid #858280;
}

.g-clip { width: 196px; }
.g-font { width: 232px; }
.g-align { width: 328px; }
.g-num { width: 156px; }
.g-styles { width: 301px; }
.g-cells { width: 160px; }
.g-edit { width: 278px; }
.g-ana { width: 91px; }
.g-sens { width: 97px; }

.tools {
    flex: 1;
    display: flex;
}

.group footer {
    position: relative;
    line-height: 12px;
    text-align: center;
}

.group .has-launch {
    padding-right: 16px;
}

.launch {
    position: absolute;
    right: 3px;
    top: 1px;
    width: 10px;
    height: 10px;
}

.big {
    display: flex;
    flex-direction: column;
    align-items: center;
    line-height: 16px;
    white-space: nowrap;
}

.big > svg:first-child {
    height: 30px;
    margin: 4px 0 2px;
}

.big > .chev {
    margin-top: 4px;
}

.big span .chev {
    display: inline-block;
}

.off {
    color: #777;
}

.stack {
    display: flex;
    flex-direction: column;
}

.stack button, .wrap button {
    height: 24px;
    display: flex;
    align-items: center;
    gap: 3px;
    white-space: nowrap;
}

.g-edit .stack button {
    height: 23px;
}

.chev.wide {
    margin-left: 8px;
}

.g-clip .tools {
    gap: 9px;
    padding-left: 10px;
}

.rows {
    display: flex;
    flex-direction: column;
    gap: 8px;
    padding-top: 7px;
}

.line {
    height: 24px;
    display: flex;
    align-items: center;
}

.g-font .tools, .g-num .tools {
    padding-left: 8px;
}

.combo {
    display: grid;
    align-items: center;
    height: 23px;
    background: #d2d2d2;
    border: 1px solid #858585;
    font-size: 12px;
}

.combo select, .combo svg {
    grid-area: 1 / 1;
}

.combo select {
    appearance: none;
    width: 100%;
    padding-left: 3px;
}

.combo svg {
    justify-self: end;
    margin-right: 2px;
    pointer-events: none;
}

.c-font { width: 123px; margin-right: 2px; }
.c-size { width: 43px; margin-right: 6px; }
.c-num { width: 140px; }

.grow {
    display: flex;
    font-size: 16px;
    margin-right: 8px;
}

.grow svg {
    color: #2a66b8;
}

.grow.small {
    font-size: 14px;
}

.up {
    transform: scaleY(-1);
}

hr {
    width: 1px;
    height: 20px;
    margin: 0;
    border: none;
    background: #a5a29f;
}

.fmt {
    gap: 9px;
    padding-left: 3px;
}

.fmt .chev {
    margin-left: -4px;
}

.fmt hr {
    margin-right: -2px;
}

.letter {
    width: 15px;
    font-size: 13px;
}

.g-align .tools {
    gap: 4px;
    padding-left: 8px;
}

.al {
    gap: 2px;
}

.al button {
    width: 22px;
    height: 23px;
    display: flex;
    align-items: center;
    justify-content: center;
}

.al hr {
    margin: 0 2px;
}

.al .pressed {
    background: #a09e9c;
    border: 1px solid #555;
}

.tall {
    height: 58px;
    margin-top: 6px;
}

.wrap {
    margin-left: 2px;
}

.num {
    gap: 7px;
    padding-left: 2px;
}

.num .chev {
    margin: 0 2px 0 -1px;
}

.pct {
    font-size: 18px;
}

.thou {
    font-size: 9px;
}

.g-styles .tools {
    gap: 6px;
    padding-left: 10px;
}

.g-cells .tools, .g-ana .tools, .g-sens .tools {
    justify-content: center;
    gap: 7px;
}

.g-edit .tools {
    gap: 8px;
    padding-left: 11px;
}

.collapse {
    align-self: flex-end;
    margin: 0 8px 0 auto;
    padding-bottom: 2px;
}

/* formula bar */
.formulabar {
    height: 46px;
    display: flex;
    padding: 10px 5px 10px 4px;
    color: #333;
    font-family: "Calibri", Lato, sans-serif;
    font-size: 14px;
}

.namebox, .fx, .formula {
    display: flex;
    align-items: center;
    background: #b1b1b1;
    border: 1px solid #444;
}

.namebox {
    width: 103px;
    padding: 0 7px;
}

.namebox input {
    width: 80px;
}

.dots {
    width: 30px;
    height: 13px;
    align-self: center;
    background: radial-gradient(circle, #ddd 1px, transparent 2px) center / 5px 5px repeat-y;
}

.fx {
    width: 110px;
    justify-content: space-between;
    padding: 0 13px 0 12px;
    margin-right: 3px;
}

.fn {
    font-family: "Liberation Serif", serif;
    font-style: italic;
    font-weight: bold;
}

.formula {
    flex: 1;
    padding: 0 4px 0 11px;
}

.formula input {
    flex: 1;
}

/* grid */
.sheet {
    flex: 1;
    min-height: 0;
    display: flex;
    border-bottom: 1px solid #999;
}

.cells {
    flex: 1;
    overflow: hidden;
    border-right: 1px solid #999;
}

table {
    table-layout: fixed;
    width: 1850px;
    border-collapse: separate;
    border-spacing: 0;
    color: #000;
    font-family: "Calibri", Lato, sans-serif;
    font-size: 14px;
    line-height: 19px;
}

th, td {
    height: 20px;
    padding: 0 2px;
    border-right: 1px solid #fff;
    border-bottom: 1px solid #fff;
    text-align: left;
    vertical-align: top;
    font-weight: normal;
    white-space: nowrap;
    position: relative;
}

.tall-row td {
    height: 40px;
}

tbody tr:nth-child(odd) td {
    background: #dce6f1;
}

tbody tr:nth-child(even) td {
    background: #b8cce4;
}

tbody tr:nth-child(n) td.plain, td.plain {
    background: #fff;
    border-color: #d4d4d4;
}

.letters th {
    color: #fff;
    text-align: center;
    border-right-color: #a0a0a0;
    border-bottom-color: #a0a0a0;
}

.letters .corner {
    background: linear-gradient(135deg, transparent 50%, #e8e8e8 50%) 10px 3px / 13px 13px no-repeat;
}

.letters .current {
    background: #262626;
    border-bottom: 2px solid #217346;
}

.rownum {
    padding: 0;
    color: #fff;
    background: #666;
    font-size: 13px;
    text-align: center;
    vertical-align: bottom;
    border-color: #a0a0a0;
}

.rownum.current {
    background: #262626;
    border-right: 2px solid #217346;
}

.names th, .names td {
    height: 21px;
    border-bottom-color: #999;
}

.names .name {
    padding: 0 0 0 2px;
    color: #fff;
    font-weight: bold;
    background: #4f81bd;
    border-bottom: 2px solid #0c5aa0;
}

.name div {
    display: flex;
    align-items: center;
    height: 19px;
}

.name span {
    flex: 1;
    overflow: hidden;
}

.name button {
    width: 16px;
    height: 17px;
    margin-right: 1px;
    flex: none;
    display: flex;
    align-items: center;
    justify-content: center;
    background: linear-gradient(to bottom, #fff, #e8ebf0);
    border: 1px solid #a6a6a6;
}

td.low {
    vertical-align: bottom;
}

td.mid {
    text-align: center;
}

td.right {
    text-align: right;
}

td.indent {
    padding-left: 11px;
}

td.birth {
    padding-right: 11px;
    text-align: right;
}

td.city {
    padding-right: 24px;
}

.tall-row td.city {
    white-space: normal;
}

td.error::before {
    content: "";
    position: absolute;
    left: 0;
    top: 0;
    border-top: 6px solid #0a8a1a;
    border-right: 6px solid transparent;
}

td.selected {
    outline: 2px solid #217346;
    z-index: 1;
}

td.selected::after {
    content: "";
    position: absolute;
    right: -4px;
    bottom: -4px;
    width: 6px;
    height: 6px;
    background: #217346;
    border: 1px solid #fff;
}

.tag {
    position: absolute;
    width: 20px;
    height: 20px;
    display: flex;
    align-items: center;
    justify-content: center;
    background: #d8d8d8;
    border: 1px solid #a0a0a0;
}

.warn {
    left: -34px;
    top: 0;
}

.fill {
    left: 1px;
    top: 1px;
}

/* scroll bars */
.vscroll {
    width: 20px;
    display: flex;
    flex-direction: column;
    padding: 2px 3px 0 2px;
}

.vscroll button, .hscroll button {
    width: 15px;
    height: 15px;
    display: flex;
    align-items: center;
    justify-content: center;
    background: #d2d2d2;
    border: 1px solid #999;
}

.track {
    flex: 1;
    background: #444;
}

.thumb {
    background: #d2d2d2;
    border: 1px solid #999;
}

.vscroll .track {
    padding-top: 309px;
}

.vscroll .thumb {
    height: 26px;
}

.sheetbar {
    height: 28px;
    display: flex;
    align-items: center;
    padding: 0 24px 0 15px;
    border-bottom: 1px solid #444;
}

.nav {
    width: 28px;
    display: flex;
    justify-content: center;
}

.sheettab {
    align-self: flex-start;
    width: 90px;
    height: 23px;
    margin: 0 32px 0 29px;
    background: #fff;
    border-bottom: 2px solid #217346;
    color: #217346;
    font-size: 12px;
    font-weight: bold;
}

.sheetbar .dots {
    margin-left: auto;
    width: 34px;
}

.hscroll {
    width: 727px;
    display: flex;
}

.hscroll .track {
    display: flex;
    padding: 0 26px 0 34px;
}

.hscroll .thumb {
    flex: 1;
}

/* status bar */
.status {
    height: 21px;
    display: flex;
    align-items: center;
    padding: 0 8px;
    background: #bfbbb8;
    border-bottom: 1px solid #666;
}

.macro {
    margin: 0 17px 0 35px;
}

.access {
    display: flex;
    align-items: center;
    gap: 4px;
}

.views {
    display: flex;
    align-self: stretch;
    margin: 0 6px 0 auto;
}

.views button {
    width: 40px;
    display: flex;
    align-items: center;
    justify-content: center;
}

.views .on {
    background: #a09e9c;
}

.zoom {
    width: 9px;
}

.slider {
    appearance: none;
    width: 100px;
    height: 14px;
    margin: 0 6px;
    background: linear-gradient(#333, #333) center / 100% 1px no-repeat;
}

.slider::-webkit-slider-thumb {
    appearance: none;
    width: 5px;
    height: 11px;
    background: #777;
}

.percent {
    width: 40px;
    text-align: right;
}
```
